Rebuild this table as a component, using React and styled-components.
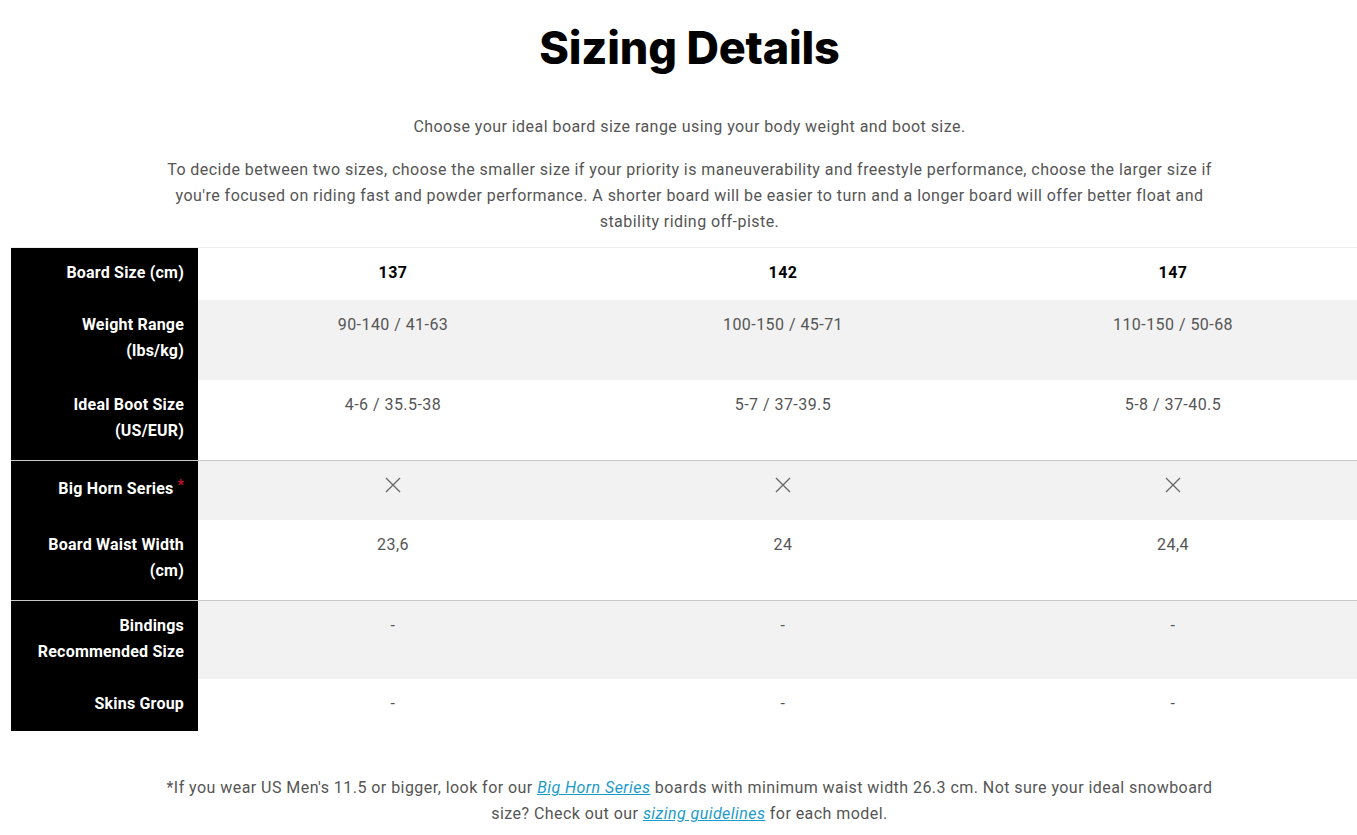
import React from 'react'
import styled, { createGlobalStyle } from 'styled-components'

const GlobalStyle = createGlobalStyle`
  body {
    margin: 0;
    background: #fff;
    overflow-x: hidden;
    font-family: Roboto, "Liberation Sans", sans-serif;
  }
`

const Page = styled.div`
  width: 1357px;
  margin-left: 11px;
  padding-top: 20px;
  padding-bottom: 20px;
`

const Title = styled.h2`
  margin: 0 0 38px;
  text-align: center;
  font-family: Inter, "Liberation Sans", sans-serif;
  font-weight: 800;
  font-size: 45px;
  line-height: 56px;
  letter-spacing: -0.2px;
  color: #000;
`

const Intro = styled.p`
  margin: 0 auto ${p => (p.$last ? '12px' : '17px')};
  max-width: 1070px;
  text-align: center;
  font-size: 16px;
  line-height: 26px;
  letter-spacing: 0.45px;
  color: #555;
`

const Table = styled.table`
  width: 100%;
  border-collapse: collapse;
  table-layout: fixed;
  margin: 0;
  border-top: 1px solid #eee;
`

const Row = styled.tr`
  background: ${p => (p.$shade ? '#f2f2f2' : '#fff')};
  border-top: ${p => (p.$divider ? '1px solid #c8c8c8' : 'none')};
`

const Label = styled.th`
  box-sizing: border-box;
  width: 187px;
  background: #000;
  color: #fff;
  text-align: right;
  vertical-align: middle;
  padding: 12px 14px ${p => (p.$tight ? '14px' : '16px')} 10px;
  font-size: 16px;
  line-height: 26px;
  font-weight: 700;
  letter-spacing: 0.2px;
`

const Star = styled.sup`
  color: #c8102e;
  font-size: 14px;
  margin-left: 4px;
  vertical-align: 4px;
  line-height: 0;
`

const Cell = styled.td`
  text-align: center;
  vertical-align: top;
  padding: 12px 10px ${p => (p.$tight ? '14px' : '16px')};
  font-size: 16px;
  line-height: 26px;
  letter-spacing: 0.45px;
  color: ${p => (p.$head ? '#000' : '#555')};
  font-weight: ${p => (p.$head ? 700 : 400)};
`

const IconBox = styled.div`
  height: 31px;
  display: flex;
  justify-content: center;
  padding-top: 4px;
  box-sizing: border-box;
`

const Note = styled.p`
  margin: 44px auto 0;
  max-width: 1070px;
  text-align: center;
  font-size: 16px;
  line-height: 26px;
  letter-spacing: 0.45px;
  color: #555;
`

const Link = styled.a`
  color: #1a9bc9;
  font-style: italic;
  text-decoration: underline;
`

const Cross = () => (
  <svg width="16" height="16" viewBox="0 0 16 16" fill="none" stroke="#666" strokeWidth="1.3">
    <path d="M1 1 L15 15 M15 1 L1 15" />
  </svg>
)

const sizes = ['137', '142', '147']

const rows = [
  { label: ['Weight Range', '(lbs/kg)'], values: ['90-140 / 41-63', '100-150 / 45-71', '110-150 / 50-68'], shade: true },
  { label: ['Ideal Boot Size', '(US/EUR)'], values: ['4-6 / 35.5-38', '5-7 / 37-39.5', '5-8 / 37-40.5'] },
  { label: ['Big Horn Series'], star: true, icon: true, shade: true, divider: true },
  { label: ['Board Waist Width', '(cm)'], values: ['23,6', '24', '24,4'] },
  { label: ['Bindings', 'Recommended Size'], values: ['-', '-', '-'], shade: true, divider: true, tight: true },
  { label: ['Skins Group'], values: ['-', '-', '-'], tight: true },
]

export default function App() {
  return (
    <Page>
      <GlobalStyle />
      <Title>Sizing Details</Title>
      <Intro>Choose your ideal board size range using your body weight and boot size.</Intro>
      <Intro $last>
        To decide between two sizes, choose the smaller size if your priority is maneuverability and freestyle
        performance, choose the larger size if you're focused on riding fast and powder performance. A shorter
        board will be easier to turn and a longer board will offer better float and stability riding off-piste.
      </Intro>
      <Table>
        <tbody>
          <Row>
            <Label $tight>Board Size (cm)</Label>
            {sizes.map(s => (
              <Cell $head $tight key={s}>{s}</Cell>
            ))}
          </Row>
          {rows.map((r, i) => (
            <Row key={i} $shade={r.shade} $divider={r.divider}>
              <Label $tight={r.tight}>
                {r.label.map((l, j) => (
                  <React.Fragment key={j}>
                    {j > 0 && <br />}
                    {l}
                  </React.Fragment>
                ))}
                {r.star && <Star>*</Star>}
              </Label>
              {sizes.map((s, j) => (
                <Cell key={s} $tight={r.tight}>
                  {r.icon ? (
                    <IconBox>
                      <Cross />
                    </IconBox>
                  ) : (
                    r.values[j]
                  )}
                </Cell>
              ))}
            </Row>
          ))}
        </tbody>
      </Table>
      <Note>
        *If you wear US Men's 11.5 or bigger, look for our <Link href="#">Big Horn Series</Link> boards with
        minimum waist width 26.3 cm. Not sure your ideal snowboard size? Check out our{' '}
        <Link href="#">sizing guidelines</Link> for each model.
      </Note>
    </Page>
  )
}
